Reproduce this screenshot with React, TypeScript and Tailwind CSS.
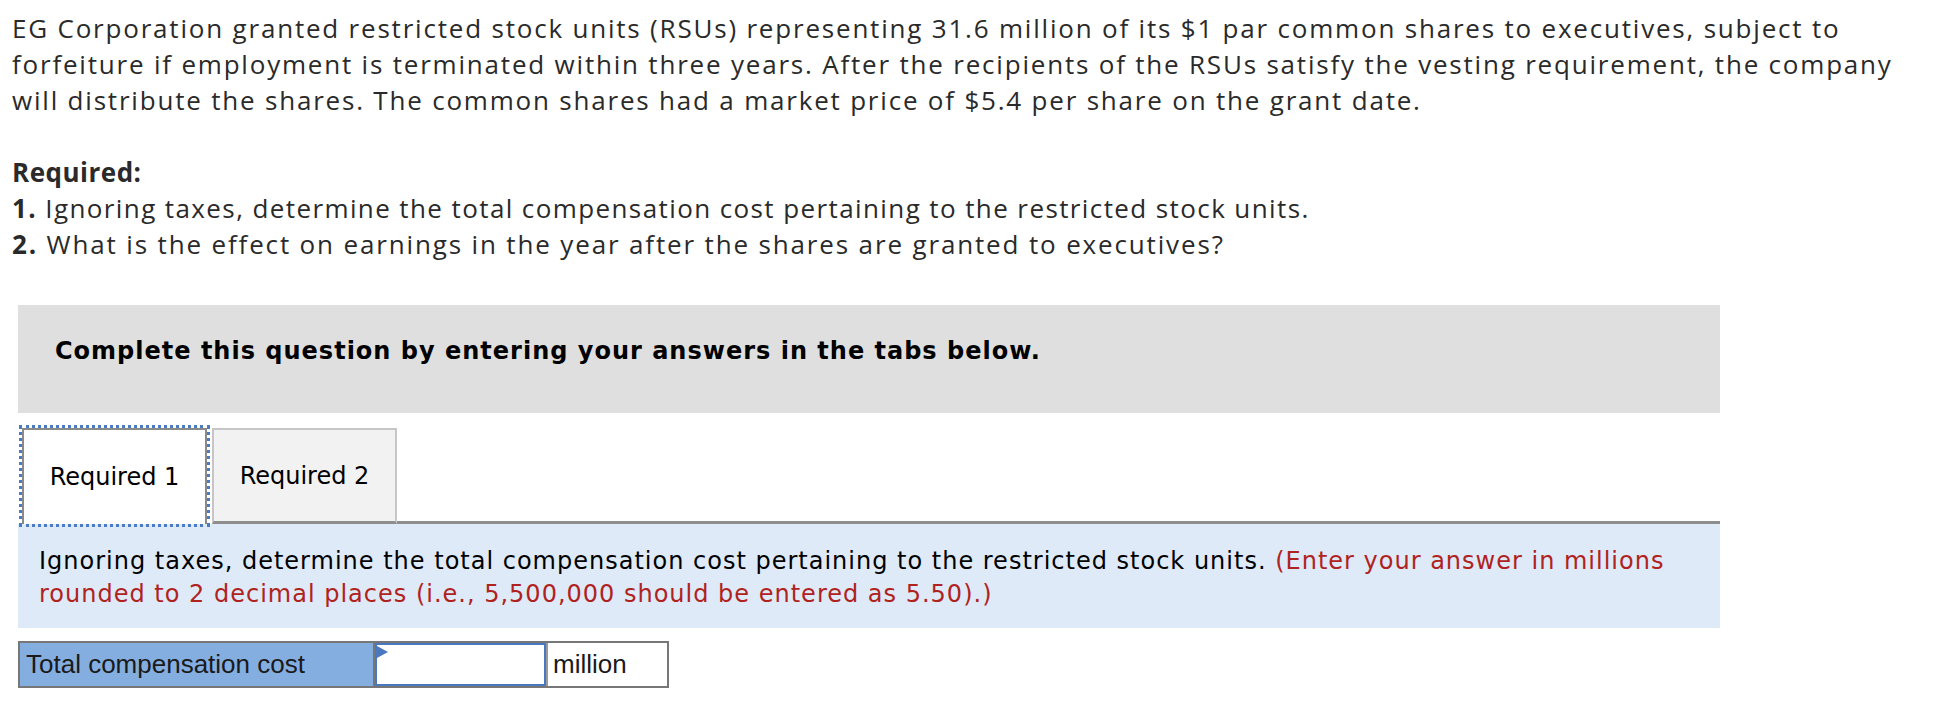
export default function App() {
  return (
    <div className="min-h-[706px] w-full bg-white">
      <div className="whitespace-nowrap px-[12px] pt-[10px] font-['Open_Sans',sans-serif] text-[26px] leading-[36px] tracking-[1.8px] text-[#2a2a2a]">
        <p>
          EG Corporation granted restricted stock units (RSUs) representing 31.6 million of its $1 par common shares to
          executives, subject to
          <br />
          forfeiture if employment is terminated within three years. After the recipients of the RSUs satisfy the vesting
          requirement, the company
          <br />
          will distribute the shares. The common shares had a market price of $5.4 per share on the grant date.
        </p>
        <p className="mt-[36px] font-bold tracking-[0.5px]">Required:</p>
        <p className="tracking-[1.4px]">
          <span className="font-bold">1.</span> Ignoring taxes, determine the total compensation cost pertaining to the
          restricted stock units.
        </p>
        <p className="tracking-[1.85px]">
          <span className="font-bold">2.</span> What is the effect on earnings in the year after the shares are granted to
          executives?
        </p>
      </div>

      <div className="ml-[18px] w-[1702px] font-['DejaVu_Sans',Verdana,sans-serif]">
        <div className="mt-[43px] flex h-[108px] items-center bg-[#dfdfdf] pb-[16px] pl-[37px] text-[24px] font-bold tracking-[1px] text-black">
          Complete this question by entering your answers in the tabs below.
        </div>

        <div className="mt-[15px] flex h-[96px] items-stretch">
          <div className="ml-[4px] flex w-[185px] items-center justify-center border-x-2 border-t-2 border-[#8a8a8a] bg-white text-[24px] text-black outline-[3px] outline-dotted outline-[#4a7bc4]">
            Required 1
          </div>
          <div className="ml-[5px] flex w-[185px] items-center justify-center border-x-2 border-t-2 border-b-[3px] border-[#c6c6c6] border-b-[#8e8e8e] bg-[#f2f2f2] text-[24px] text-black">
            Required 2
          </div>
          <div className="flex-1 border-b-[3px] border-[#8e8e8e]" />
        </div>

        <div className="whitespace-nowrap bg-[#deeaf7] px-[21px] pb-[17px] pt-[21px] text-[24px] leading-[33px] tracking-[1px] text-black">
          Ignoring taxes, determine the total compensation cost pertaining to the restricted stock units.{" "}
          <span className="text-[#b0221e]">
            (Enter your answer in millions
            <br />
            rounded to 2 decimal places (i.e., 5,500,000 should be entered as 5.50).)
          </span>
        </div>

        <div className="mt-[13px] flex h-[47px] w-[651px] border-2 border-[#777777] font-['Liberation_Sans',Arial,sans-serif] text-[26px] text-[#1a1a1a]">
          <div className="flex w-[355px] items-center border-r-2 border-[#777777] bg-[#84ade0] pl-[6px]">
            Total compensation cost
          </div>
          <div className="relative w-[171px] border-2 border-[#4a78c0] bg-white">
            <svg className="absolute left-0 top-[1px]" width="11" height="13" viewBox="0 0 11 13">
              <path d="M0 0 L11 6 L0 12 Z" fill="#4a78c0" />
            </svg>
          </div>
          <div className="flex flex-1 items-center border-l-2 border-[#9a9a9a] bg-white pl-[5px]">million</div>
        </div>
      </div>
    </div>
  );
}
